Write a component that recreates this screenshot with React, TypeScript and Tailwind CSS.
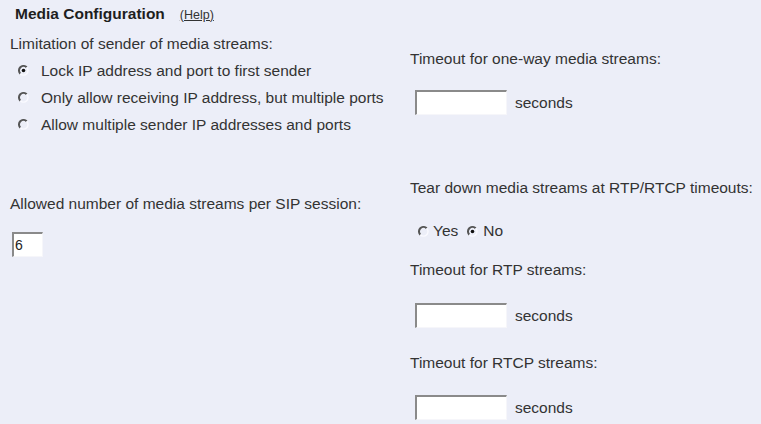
import React from "react";

function Radio({ checked }: { checked?: boolean }) {
  return (
    <svg width="11" height="11" viewBox="0 0 11 11" className="shrink-0">
      <path d="M2.3 8.7 A4.5 4.5 0 0 1 8.7 2.3" fill="none" stroke="#555" strokeWidth="2" />
      <path d="M8.7 2.3 A4.5 4.5 0 0 1 2.3 8.7" fill="none" stroke="#fafaff" strokeWidth="1.4" />
      {checked && <circle cx="5.5" cy="5.5" r="1.8" fill="#111" />}
    </svg>
  );
}

function Field({ w, value }: { w: string; value?: string }) {
  return (
    <div
      className={`${w} h-[25px] bg-white border-t-2 border-l-2 border-b border-r border-t-[#8a8a8a] border-l-[#8a8a8a] border-b-[#f6f6fa] border-r-[#f6f6fa] flex items-center pl-[1px] text-[14px] text-[#222]`}
    >
      {value}
    </div>
  );
}

function Label({ children, className = "" }: { children: React.ReactNode; className?: string }) {
  return <div className={`h-[16px] flex items-center whitespace-nowrap ${className}`}>{children}</div>;
}

export default function App() {
  return (
    <div
      className="w-[761px] h-[424px] bg-[#eceef8] text-[#333333] text-[15.5px] overflow-hidden"
      style={{ fontFamily: '"Liberation Sans", Arial, sans-serif' }}
    >
      <div className="h-[28px] flex items-end pb-[7px] pl-[15px]">
        <span className="text-[15.5px] font-bold text-[#1e1e1e] leading-none">Media Configuration</span>
        <span className="ml-[15px] text-[12.5px] underline leading-none text-[#333]">(Help)</span>
      </div>
      <div className="grid grid-cols-[410px_1fr]">
        <div className="pl-[10px] flex flex-col">
          <Label className="mt-[8px]">Limitation of sender of media streams:</Label>
          <div className="mt-[5px] flex flex-col">
            {[
              ["Lock IP address and port to first sender", true],
              ["Only allow receiving IP address, but multiple ports", false],
              ["Allow multiple sender IP addresses and ports", false],
            ].map(([t, c]) => (
              <div key={t as string} className="h-[27px] flex items-center pl-[8px]">
                <Radio checked={c as boolean} />
                <span className="ml-[12px] whitespace-nowrap">{t as string}</span>
              </div>
            ))}
          </div>
          <Label className="mt-[58px]">Allowed number of media streams per SIP session:</Label>
          <div className="mt-[20px] pl-[2px]">
            <Field w="w-[31px]" value="6" />
          </div>
        </div>
        <div className="flex flex-col">
          <Label className="mt-[23px]">Timeout for one-way media streams:</Label>
          <div className="mt-[23px] pl-[5px] flex items-center">
            <Field w="w-[92px]" />
            <span className="ml-[8px]">seconds</span>
          </div>
          <Label className="mt-[65px]">Tear down media streams at RTP/RTCP timeouts:</Label>
          <div className="mt-[27px] h-[16px] flex items-center pl-[8px]">
            <Radio />
            <span className="ml-[4px]">Yes</span>
            <span className="ml-[9px]">
              <Radio checked />
            </span>
            <span className="ml-[5px]">No</span>
          </div>
          <Label className="mt-[23px]">Timeout for RTP streams:</Label>
          <div className="mt-[25px] pl-[5px] flex items-center">
            <Field w="w-[92px]" />
            <span className="ml-[8px]">seconds</span>
          </div>
          <Label className="mt-[27px]">Timeout for RTCP streams:</Label>
          <div className="mt-[24px] pl-[5px] flex items-center">
            <Field w="w-[92px]" />
            <span className="ml-[8px]">seconds</span>
          </div>
        </div>
      </div>
    </div>
  );
}
